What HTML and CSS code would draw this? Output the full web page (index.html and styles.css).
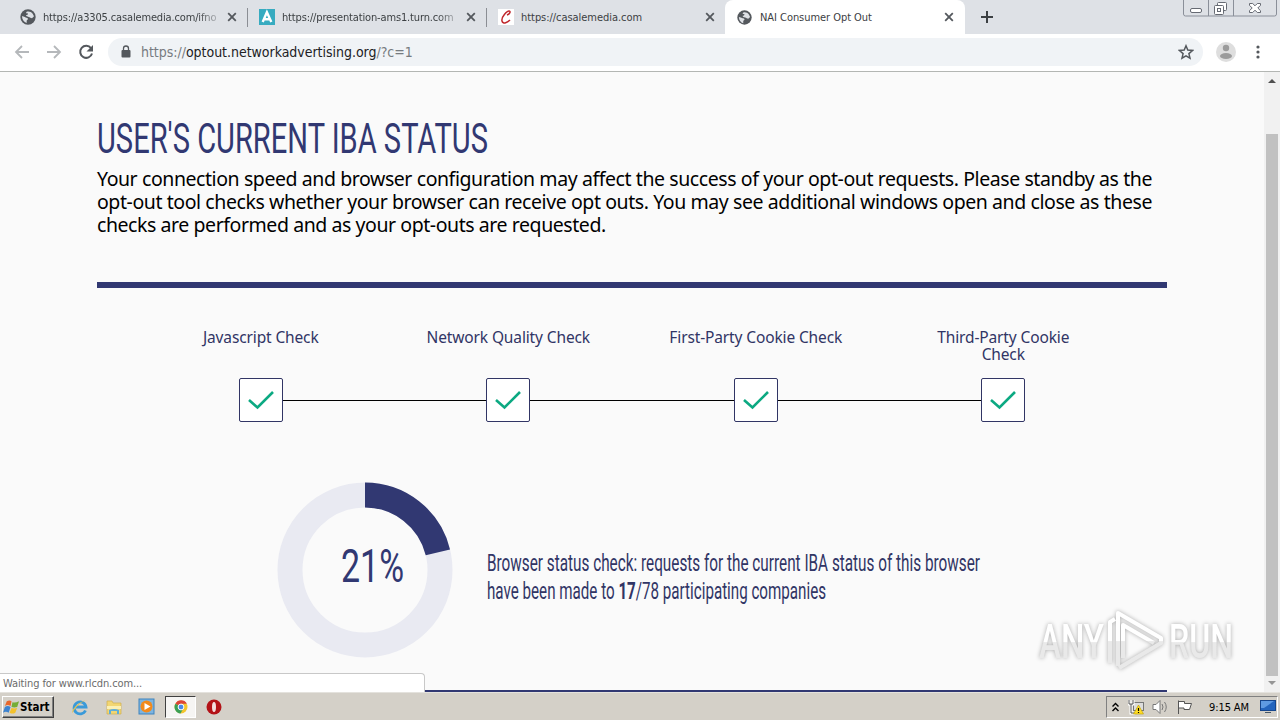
FILE: index.html
```html
<!DOCTYPE html>
<html lang="en">
<head>
    <meta charset="UTF-8">
    <meta name="viewport" content="width=device-width, initial-scale=1.0">
    <title>NAI Consumer Opt Out</title>
    <link rel="stylesheet" href="styles.css">
</head>
<body>
    <svg class="defs" aria-hidden="true">
        <symbol id="globe" viewBox="0 0 24 24">
            <circle cx="12" cy="12" r="11.5" fill="#54585d"/>
            <path d="M3 11c2 0 4 1 6 2 2 0 3 1 3 2s-2 1-2 3v3C6 20 3 16 3 11zM10 4c3-1 7 0 9 3l2 4-3 3c-2 0-3-2-5-2-2-1-4-1-4-3 2 0 3-1 3-2-1-1-3 0-3-1z" fill="#dee1e6"/>
        </symbol>
        <symbol id="close" viewBox="0 0 10 10">
            <path d="M1.2 1.2l7.6 7.6M8.8 1.2L1.2 8.8" stroke="#54585d" stroke-width="1.8"/>
        </symbol>
        <symbol id="check" viewBox="0 0 28 20">
            <path d="M2 10l8.5 7.5L26 2" fill="none" stroke="#0ca982" stroke-width="2.6"/>
        </symbol>
    </svg>

    <div class="tabs">
        <div class="tab tab-first">
            <svg class="favicon"><use href="#globe"/></svg>
            <span class="tab-title fade">https://a3305.casalemedia.com/ifno</span>
            <svg class="close"><use href="#close"/></svg>
        </div>
        <div class="tab">
            <svg class="favicon" viewBox="0 0 16 16"><rect width="16" height="16" fill="#37abc0"/><path d="M3.7 13L7.900 3.200 12.300 13M5.500 10.200h5" fill="none" stroke="#fff" stroke-width="2.4"/></svg>
            <span class="tab-title fade">https://presentation-ams1.turn.com</span>
            <svg class="close"><use href="#close"/></svg>
        </div>
        <div class="tab">
            <svg class="favicon" viewBox="0 0 16 16"><rect width="16" height="16" fill="#fff"/><path d="M9 6c3-1 4-4 2-4S3 8 4 12s6 1 8-1" fill="none" stroke="#c0272d" stroke-width="1.5"/></svg>
            <span class="tab-title">https://casalemedia.com</span>
            <svg class="close"><use href="#close"/></svg>
        </div>
        <div class="tab active">
            <svg class="favicon"><use href="#globe"/></svg>
            <span class="tab-title">NAI Consumer Opt Out</span>
            <svg class="close"><use href="#close"/></svg>
        </div>
        <svg class="new-tab" viewBox="0 0 12 12"><path d="M6 0v12M0 6h12" stroke="#3c4043" stroke-width="2"/></svg>
        <svg class="window-buttons" viewBox="0 0 94 17">
            <path d="M.5 0v14q0 2 2 2h89q2 0 2-2V0M25.500 0v16M50.500 0v16" fill="none" stroke="#8a8f99"/>
            <g fill="#fff" stroke="#666a73">
                <rect x="7.500" y="8.500" width="11" height="4" rx="1.500"/>
                <rect x="34.500" y="2.500" width="9" height="8" rx="1"/>
                <rect x="31.500" y="5.500" width="9" height="9" rx="1"/>
                <rect x="34.500" y="8.500" width="3" height="3"/>
                <path d="M66.500 3.500h3.200l2.300 2.300 2.300-2.300h3.200v1.800L74.800 8l2.700 2.700v1.800h-3.200L72 10.200l-2.300 2.300h-3.200v-1.800L69.200 8l-2.700-2.700z"/>
            </g>
        </svg>
    </div>

    <div class="toolbar">
        <svg class="nav-icon" viewBox="0 0 16 16"><path d="M15 8H2M8 2L2 8l6 6" fill="none" stroke="#b5b8bb" stroke-width="1.800"/></svg>
        <svg class="nav-icon" viewBox="0 0 16 16"><path d="M1 8h13M8 2l6 6-6 6" fill="none" stroke="#b5b8bb" stroke-width="1.800"/></svg>
        <svg class="nav-icon" viewBox="0 0 16 16"><path d="M13 4.200A6 6 0 1 0 14 9.500" fill="none" stroke="#54585d" stroke-width="2"/><path d="M15 1v6.500H8.500z" fill="#54585d"/></svg>
        <div class="omnibox">
            <svg class="lock" viewBox="0 0 10 13"><rect x=".5" y="5" width="9" height="7.500" rx="1" fill="#54585d"/><path d="M2.500 5V3.500a2.500 2.500 0 0 1 5 0V5" fill="none" stroke="#54585d" stroke-width="1.300"/></svg>
            <span class="url">https://<b>optout.networkadvertising.org</b>/?c=1</span>
            <svg class="star" viewBox="0 0 16 16"><path d="M8 1.800l1.800 4.300 4.700.4-3.600 3.100 1.100 4.600L8 11.800l-4 2.400 1.100-4.600-3.600-3.100 4.700-.4z" fill="none" stroke="#54585d" stroke-width="1.500"/></svg>
        </div>
        <svg class="avatar" viewBox="0 0 20 20"><circle cx="10" cy="10" r="10" fill="#dedede"/><circle cx="10" cy="6" r="3.200" fill="#9b9b9b"/><ellipse cx="10" cy="14" rx="6" ry="3" fill="#9b9b9b"/></svg>
        <svg class="menu" viewBox="0 0 4 14"><g fill="#54585d"><circle cx="2" cy="2" r="1.600"/><circle cx="2" cy="7" r="1.600"/><circle cx="2" cy="12" r="1.600"/></g></svg>
    </div>

    <div class="viewport">
        <main class="page">
            <svg class="heading" role="heading" aria-level="1"><text x="0" y="34" textLength="391" lengthAdjust="spacingAndGlyphs">USER'S CURRENT IBA STATUS</text></svg>
            <p class="intro">
                <span class="line-one">Your connection speed and browser configuration may affect the success of your opt-out requests. Please standby as the</span>
                <span class="line-two">opt-out tool checks whether your browser can receive opt outs. You may see additional windows open and close as these</span>
                <span>checks are performed and as your opt-outs are requested.</span>
            </p>

            <div class="steps">
                <div class="step">
                    <div class="step-label">Javascript Check</div>
                    <div class="step-box"><svg><use href="#check"/></svg></div>
                </div>
                <div class="step">
                    <div class="step-label">Network Quality Check</div>
                    <div class="step-box"><svg><use href="#check"/></svg></div>
                </div>
                <div class="step">
                    <div class="step-label">First-Party Cookie Check</div>
                    <div class="step-box"><svg><use href="#check"/></svg></div>
                </div>
                <div class="step">
                    <div class="step-label">Third-Party Cookie<br>Check</div>
                    <div class="step-box"><svg><use href="#check"/></svg></div>
                </div>
            </div>

            <div class="progress">
                <svg class="donut" viewBox="0 0 176 176">
                    <circle cx="88" cy="88" r="75" fill="none" stroke="#e9eaf2" stroke-width="25"/>
                    <circle cx="88" cy="88" r="75" fill="none" stroke="#313872" stroke-width="25" pathLength="100" stroke-dasharray="21.200 78.800" transform="rotate(-90 88 88)"/>
                    <text x="64" y="100" textLength="63" lengthAdjust="spacingAndGlyphs">21%</text>
                </svg>
                <svg class="status">
                    <text x="0" y="21" textLength="493" lengthAdjust="spacingAndGlyphs">Browser status check: requests for the current IBA status of this browser</text>
                    <text x="0" y="49" textLength="339" lengthAdjust="spacingAndGlyphs">have been made to <tspan class="count">17</tspan>/78 participating companies</text>
                </svg>
            </div>
        </main>
        <div class="scrollbar">
            <span class="arrow-up"></span>
            <span class="thumb"></span>
            <span class="arrow-down"></span>
        </div>
        <div class="load-status">Waiting for www.rlcdn.com...</div>
        <svg class="watermark" viewBox="0 0 204 72">
            <defs>
                <linearGradient id="shine" x1="0" y1="0" x2="0" y2="1">
                    <stop offset="0" stop-color="#fff"/>
                    <stop offset=".5" stop-color="#fff"/>
                    <stop offset=".52" stop-color="#e9e9e9"/>
                    <stop offset="1" stop-color="#e9e9e9"/>
                </linearGradient>
            </defs>
            <text x="4" y="53" textLength="65" lengthAdjust="spacingAndGlyphs">ANY</text>
            <text x="134" y="53" textLength="64" lengthAdjust="spacingAndGlyphs">RUN</text>
            <path d="M75 58V17l5-3M83 61V8l43 25v5L84 63M88 53V20l31 18" fill="none" stroke="url(#shine)" stroke-width="4" stroke-linejoin="round"/>
        </svg>
    </div>

    <div class="taskbar">
        <div class="start">
            <svg viewBox="0 0 18 16"><path d="M4 2q3-2 5 0L8 7Q5 5 2 7z" fill="#e8672c"/><path d="M10 3q3 1 7-1l-2 6q-3 1-6 0z" fill="#75ad35"/><path d="M2 8q3-2 6 0l-2 6q-3-2-6 0z" fill="#3d83d0"/><path d="M9 9q3 1 6 0l-2 5q-3 2-6 0z" fill="#f3c12c"/></svg>
            <span>Start</span>
        </div>
        <div class="launch">
            <svg viewBox="0 0 18 18"><path d="M14.500 12.500A6 6 0 1 1 15 9H5" fill="none" stroke="#3a9ad9" stroke-width="2.800"/><path d="M1.500 15C0 11 10 2 17 2c-5 0-13 7-15.500 13z" fill="#e8c34a"/></svg>
        </div>
        <div class="launch">
            <svg viewBox="0 0 18 18"><path d="M2 3h5l1 2h8v11H2z" fill="#f2d673" stroke="#d0b04e" stroke-width=".7"/><path d="M2 8h14v3H2z" fill="#fbf0b5"/><path d="M4 16v-4q5-2 10 0v4h-2v-3H6v3z" fill="#5eaedb"/></svg>
        </div>
        <div class="launch">
            <svg viewBox="0 0 18 18"><rect x="1" y="1" width="15" height="15" fill="#7cb4e0" stroke="#3e83bd"/><circle cx="8.500" cy="8.500" r="6" fill="#f28a1c"/><path d="M6.500 5l6 3.500-6 3.500z" fill="#fff"/></svg>
        </div>
        <div class="launch pressed">
            <svg viewBox="0 0 18 18"><circle cx="9" cy="9" r="6.500" fill="#f3c52d"/><path d="M9 9L3.400 5.700a6.500 6.500 0 0 1 11.500 0H9z" fill="#dc4437"/><path d="M9 9L3.400 5.700A6.500 6.500 0 0 0 8.500 15.500L11 11z" fill="#3a9f55"/><circle cx="9" cy="9" r="2.900" fill="#4788e8" stroke="#fff"/></svg>
        </div>
        <div class="launch">
            <svg viewBox="0 0 18 18"><circle cx="9" cy="9" r="7.500" fill="#b31217"/><ellipse cx="9" cy="9" rx="2" ry="5" fill="#f3dede"/></svg>
        </div>
        <div class="tray">
            <svg class="chevrons" viewBox="0 0 7 10"><path d="M.5 4.500l3-3 3 3M.5 9l3-3 3 3" fill="none" stroke="#000" stroke-width="1.400"/></svg>
            <svg class="tray-icon" viewBox="0 0 17 16"><rect x="5.500" y="3.500" width="10" height="8" fill="#ddd" stroke="#777"/><path d="M1 1v4h4V1M3 5v9h4" fill="none" stroke="#fff" stroke-width="3"/><path d="M1 1v4h4V1M3 5v9h4" fill="none" stroke="#555"/><path d="M10.500 6l5 9h-10z" fill="#ffdc24" stroke="#b99a00" stroke-width=".6"/><path d="M10.500 9v3M10.500 13v1" stroke="#000" stroke-width="1.200"/></svg>
            <svg class="tray-icon" viewBox="0 0 17 16"><path d="M1 5.500h3l4-4v13l-4-4H1z" fill="#fff" stroke="#777"/><path d="M10 5q2 3 0 6M12.500 3q3.500 5 0 10" fill="none" stroke="#777"/></svg>
            <svg class="tray-icon flag" viewBox="0 0 17 16"><path d="M2.500 15V1.500M2.500 2.500h6v2h7l-2 6H8V9H2.500" fill="#fff" stroke="#555"/></svg>
            <span class="clock">9:15 AM</span>
            <svg class="monitor" viewBox="0 0 16 14"><rect x=".5" y=".5" width="15" height="10" fill="#2465bd" stroke="#16468c"/><path d="M1 1h13L4 8H1z" fill="#5f9be2"/><path d="M5 12h6v1H5z" fill="#456"/></svg>
        </div>
    </div>
</body>
</html>
```
FILE: styles.css
```css
* {
    box-sizing: border-box;
}
body {
    width: 1280px;
    height: 720px;
    margin: 0;
    overflow: hidden;
    display: flex;
    flex-direction: column;
    background: #fafafa;
    font-family: "DejaVu Sans Condensed", "DejaVu Sans", sans-serif;
    font-stretch: condensed;
}
svg {
    display: block;
    flex: none;
}
.defs {
    display: none;
}

/* browser tabs */
.tabs {
    height: 34px;
    flex: none;
    display: flex;
    background: #dee1e6;
}
.tab {
    width: 239px;
    height: 34px;
    display: flex;
    align-items: center;
    padding: 0 10px 0 12px;
    position: relative;
}
.tab:nth-child(2)::before,
.tab:nth-child(3)::before {
    content: "";
    position: absolute;
    left: 0;
    top: 8px;
    width: 1px;
    height: 19px;
    background: #8b8e94;
}
.tab-first {
    width: 247px;
    padding-left: 20px;
}
.tab.active {
    width: 240px;
    padding-right: 11px;
    background: #fff;
    border-radius: 8px 8px 0 0;
}
.favicon {
    width: 16px;
    height: 16px;
    margin-right: 7px;
}
.active .favicon {
    width: 15px;
    height: 15px;
    margin-right: 8px;
}
.tab-title {
    flex: 1;
    min-width: 0;
    overflow: hidden;
    white-space: nowrap;
    font-size: 11px;
    letter-spacing: -0.05px;
    color: #3c4043;
}
.fade {
    letter-spacing: -0.15px;
    -webkit-mask-image: linear-gradient(to right, #000 88%, transparent 103%);
    mask-image: linear-gradient(to right, #000 88%, transparent 103%);
}
.close {
    width: 10px;
    height: 10px;
    margin-left: 8px;
}
.new-tab {
    width: 12px;
    height: 12px;
    margin: 11px 0 0 16px;
}
.window-buttons {
    width: 94px;
    height: 17px;
    margin-left: auto;
    margin-right: 3px;
}

/* address bar */
.toolbar {
    height: 38px;
    flex: none;
    display: flex;
    align-items: center;
    padding: 0 20px 2px 14px;
    background: #fff;
    border-bottom: 1px solid #b3b6b3;
}
.nav-icon {
    width: 16px;
    height: 16px;
    margin-right: 16px;
}
.omnibox {
    width: 1095px;
    height: 28px;
    margin-left: -2px;
    display: flex;
    align-items: center;
    padding: 0 9px 0 13px;
    border-radius: 14px;
    background: #f0f3f6;
}
.lock {
    width: 10px;
    height: 13px;
}
.url {
    flex: 1;
    margin-left: 10px;
    font-size: 14px;
    letter-spacing: -0.03px;
    color: #777b80;
}
.url b {
    font-weight: normal;
    color: #202124;
}
.star {
    width: 16px;
    height: 16px;
}
.avatar {
    width: 20px;
    height: 20px;
    margin-left: 13px;
}
.menu {
    width: 4px;
    height: 14px;
    margin-left: auto;
}

/* page */
.viewport {
    height: 620px;
    flex: none;
    display: flex;
    justify-content: space-between;
    position: relative;
}
.page {
    width: 1070px;
    margin-left: 97px;
    padding-top: 47px;
    border-bottom: 2px solid #313872;
    font-family: "Noto Sans", sans-serif;
    font-stretch: normal;
}
.heading {
    width: 400px;
    height: 50px;
    margin-bottom: -4px;
    fill: #313872;
    font: 400 42px Roboto, sans-serif;
    overflow: visible;
}
.intro {
    height: 123px;
    margin: 0;
    padding-top: 2px;
    border-bottom: 6px solid #313872;
    font-size: 19.5px;
    line-height: 23px;
    letter-spacing: -0.43px;
    color: #000;
}
.intro span {
    display: block;
    white-space: nowrap;
}
.intro .line-one,
.intro .line-two {
    width: 1055px;
    text-align-last: justify;
}
.steps {
    width: 990px;
    height: 134px;
    margin: 0 0 0 40px;
    padding-top: 41px;
    display: grid;
    grid-template-columns: repeat(4, 1fr);
}
.step {
    display: flex;
    flex-direction: column;
    align-items: center;
    position: relative;
}
.step + .step::before {
    content: "";
    position: absolute;
    right: 50%;
    top: 71px;
    width: 100%;
    height: 1px;
    background: #000;
}
.step-label {
    height: 49px;
    font-size: 15.5px;
    line-height: 17px;
    letter-spacing: -0.13px;
    text-align: center;
    white-space: nowrap;
    color: #313565;
}
.step-box {
    width: 44px;
    height: 44px;
    display: flex;
    align-items: center;
    justify-content: center;
    border: 1px solid #313565;
    border-radius: 2px;
    background: #fff;
    z-index: 1;
}
.step-box svg {
    width: 28px;
    height: 20px;
}
.progress {
    display: flex;
    margin: 60px 0 0 180px;
}
.donut {
    width: 176px;
    height: 176px;
}
.donut text {
    fill: #313872;
    font: 400 46px Roboto, sans-serif;
}
.status {
    width: 500px;
    height: 60px;
    margin: 68px 0 0 34px;
    fill: #313565;
    font: 400 23px Roboto, sans-serif;
}
.count {
    font-weight: 700;
}

.scrollbar {
    width: 16px;
    display: flex;
    flex-direction: column;
    align-items: center;
    background: #f1f1f1;
}
.arrow-up {
    margin-top: 7px;
    border: 4px solid transparent;
    border-top: 0;
    border-bottom-color: #505050;
}
.thumb {
    width: 12px;
    height: 542px;
    margin-top: 51px;
    background: #c1c1c1;
}
.arrow-down {
    margin-top: 5px;
    border: 4px solid transparent;
    border-bottom: 0;
    border-top-color: #969696;
}
.load-status {
    position: absolute;
    left: 0;
    bottom: 0;
    width: 425px;
    height: 19px;
    padding-left: 3px;
    border: 1px solid #c8c8c8;
    border-left: 0;
    border-bottom: 0;
    border-radius: 0 4px 0 0;
    background: #fff;
    font-size: 11px;
    line-height: 19px;
    letter-spacing: -0.1px;
    color: #6b6b6b;
}
.watermark {
    position: absolute;
    right: 41px;
    bottom: 15px;
    width: 204px;
    height: 72px;
    filter: drop-shadow(0 0 2px #aaa);
}
.watermark text {
    fill: url(#shine);
    font: 500 48px Roboto, sans-serif;
}

/* taskbar */
.taskbar {
    height: 28px;
    flex: none;
    display: flex;
    align-items: center;
    padding: 1px 2px 0;
    border-top: 1px solid #e4e2dd;
    background: #d4d0c8;
}
.start {
    width: 52px;
    height: 22px;
    display: flex;
    align-items: center;
    border: 1px solid;
    border-color: #fff #404040 #404040 #fff;
    box-shadow: inset -1px -1px #808080;
    font-size: 11.5px;
    font-weight: bold;
    color: #000;
}
.start svg {
    width: 17px;
    height: 16px;
}
.launch {
    width: 33.8px;
    height: 22px;
    display: flex;
    align-items: center;
    justify-content: center;
}
.start + .launch {
    margin-left: 9px;
}
.launch svg {
    width: 18px;
    height: 18px;
}
.launch.pressed {
    width: 31px;
    margin: 0 1px;
    border: 1px solid;
    border-color: #404040 #fff #fff #404040;
    background: #f6f5f3;
}
.tray {
    width: 172px;
    height: 22px;
    margin-left: auto;
    display: flex;
    align-items: center;
    padding-left: 5px;
    border: 1px solid;
    border-color: #808080 #fff #fff #808080;
}
.chevrons {
    width: 7px;
    height: 10px;
    margin-right: 9px;
}
.tray-icon {
    width: 17px;
    height: 16px;
    margin-right: 7px;
}
.clock {
    margin-left: 9px;
    font-size: 11px;
    letter-spacing: -0.1px;
    white-space: nowrap;
    color: #000;
}
.monitor {
    width: 16px;
    height: 14px;
    margin: 0 1px 0 auto;
}
```
